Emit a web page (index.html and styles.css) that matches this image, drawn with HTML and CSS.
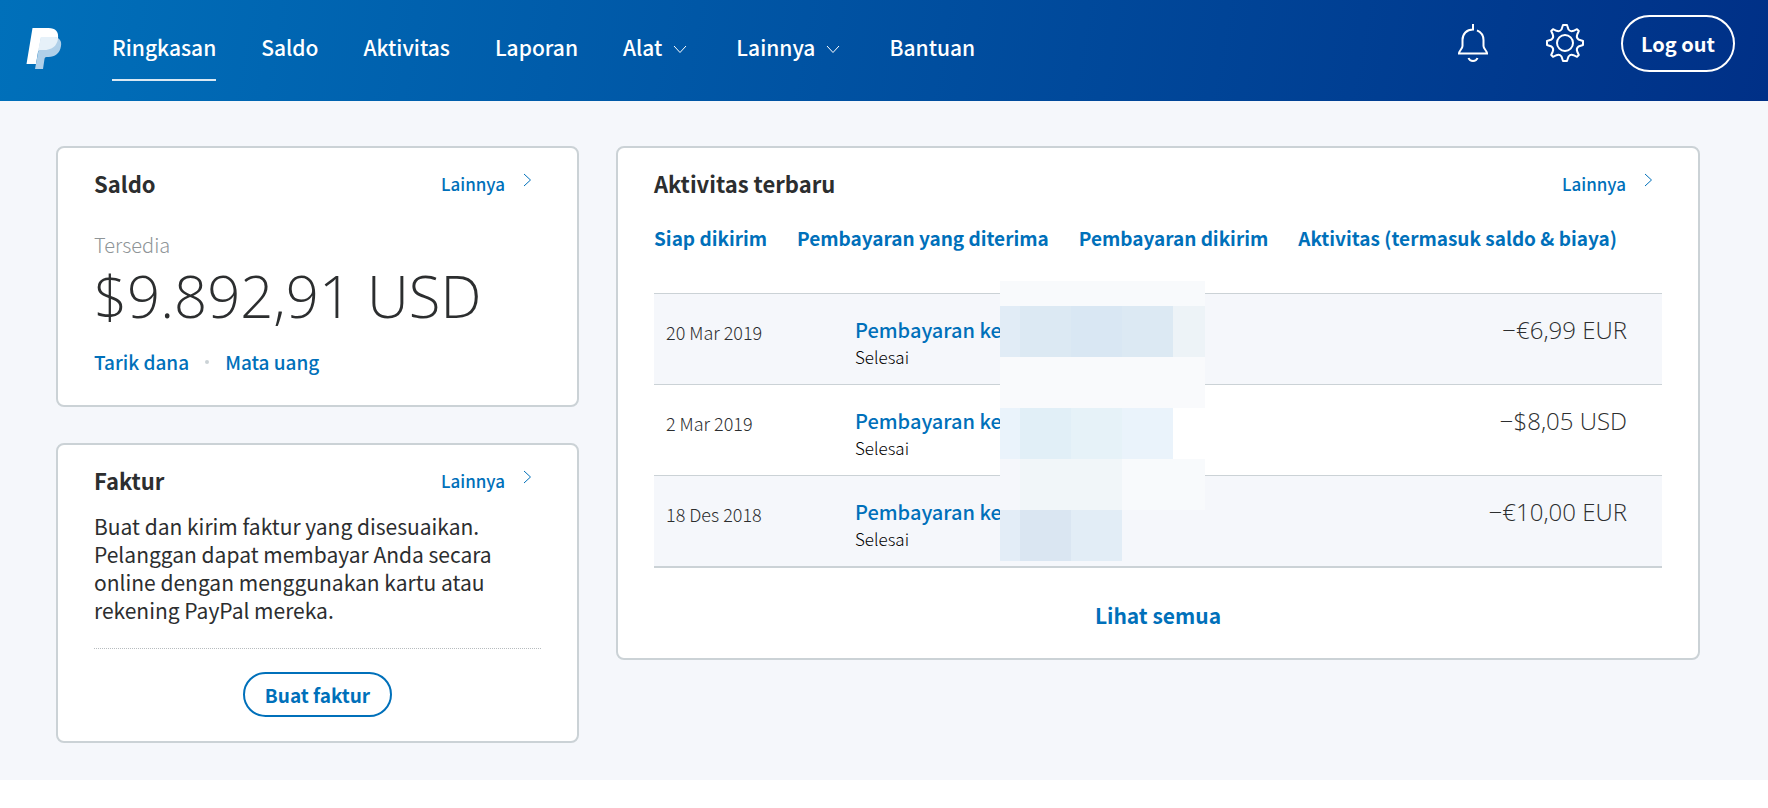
FILE: index.html
```html
<!DOCTYPE html>
<html lang="id">
<head>
<meta charset="utf-8">
<meta name="viewport" content="width=device-width, initial-scale=1">
<title>PayPal: Ringkasan</title>
<link rel="stylesheet" href="styles.css">
</head>
<body>
<header class="header">
  <a class="logo" href="#" aria-label="PayPal">
    <svg width="36" height="42" viewBox="0 0 36 42" aria-hidden="true">
      <path fill="#fff" d="M6.500 0H22.500C29.500 0 33 4 32 10.500C30.800 18.500 25.500 22 17.500 22H14.500C13 22 12.300 22.800 12 24L10 36H0.500Z"/>
      <path fill="#b0d0e9" d="M15 9H27C33.500 9 36 13 35 18C33.800 25.500 29 29 22.500 29H20.500C19.300 29 18.700 29.800 18.500 31L17 41H9Z"/>
      <path fill="#e6f1f9" d="M15 9H27C29 9 30.800 9.400 32.100 10.200C31 18.500 25.500 22 17.500 22H13.500C12.800 22 12.200 22.500 12 23Z"/>
    </svg>
  </a>
  <nav class="nav">
    <a class="nav-link nav-current" href="#" aria-current="page">Ringkasan</a>
    <a class="nav-link" href="#">Saldo</a>
    <a class="nav-link" href="#">Aktivitas</a>
    <a class="nav-link" href="#">Laporan</a>
    <button class="nav-link nav-menu" type="button">Alat
      <svg class="caret" width="14" height="9" viewBox="0 0 14 9" aria-hidden="true"><path d="M1 1L7 7.500L13 1"/></svg>
    </button>
    <button class="nav-link nav-menu" type="button">Lainnya
      <svg class="caret" width="14" height="9" viewBox="0 0 14 9" aria-hidden="true"><path d="M1 1L7 7.500L13 1"/></svg>
    </button>
    <a class="nav-link" href="#">Bantuan</a>
  </nav>
  <div class="tools">
    <button class="icon-button" type="button" aria-label="Notifikasi">
      <svg width="30" height="38" viewBox="0 0 30 38" aria-hidden="true">
        <path d="M15 0V5.500C8.500 5.500 4.500 10 4.500 16V22C4.500 25 1 26.500 1 29.500H29C29 26.500 25.500 25 25.500 22V16C25.500 11.500 23 8 19 6.300M10.500 34C12 38 18 38 19.500 34"/>
      </svg>
    </button>
    <button class="icon-button" type="button" aria-label="Pengaturan">
      <svg width="38" height="38" viewBox="0 0 38 38" aria-hidden="true">
        <circle cx="19" cy="19" r="8"/>
        <path stroke-linejoin="round" d="M17 1H21L22.500 5.500Q24.500 8 27.500 6.800L31 5.200L32.800 7L31.200 10.500Q30 13.500 32.500 15.500L37 17V21L32.500 22.500Q30 24.500 31.200 27.500L32.800 31L31 32.800L27.500 31.200Q24.500 30 22.500 32.500L21 37H17L15.500 32.500Q13.500 30 10.500 31.200L7 32.800L5.200 31L6.800 27.500Q8 24.500 5.500 22.500L1 21V17L5.500 15.500Q8 13.500 6.800 10.500L5.200 7L7 5.200L10.500 6.800Q13.500 8 15.500 5.500Z"/>
      </svg>
    </button>
    <button class="logout" type="button">Log out</button>
  </div>
</header>

<main class="main">
  <div class="column">
    <section class="card">
      <div class="card-head">
        <h2 class="card-title">Saldo</h2>
        <a class="more" href="#">Lainnya
          <svg width="9" height="14" viewBox="0 0 9 14" aria-hidden="true"><path d="M1 1L7.500 7L1 13"/></svg>
        </a>
      </div>
      <p class="balance-label">Tersedia</p>
      <p class="balance">$9.892,91 USD</p>
      <div class="balance-links">
        <a href="#">Tarik dana</a>
        <span class="dot"></span>
        <a href="#">Mata uang</a>
      </div>
    </section>
    <section class="card">
      <div class="card-head">
        <h2 class="card-title">Faktur</h2>
        <a class="more" href="#">Lainnya
          <svg width="9" height="14" viewBox="0 0 9 14" aria-hidden="true"><path d="M1 1L7.500 7L1 13"/></svg>
        </a>
      </div>
      <p class="invoice-text">Buat dan kirim faktur yang disesuaikan. Pelanggan dapat membayar Anda secara online dengan menggunakan kartu atau rekening PayPal mereka.</p>
      <div class="invoice-action">
        <button class="outline-button" type="button">Buat faktur</button>
      </div>
    </section>
  </div>

  <section class="card">
    <div class="card-head">
      <h2 class="card-title">Aktivitas terbaru</h2>
      <a class="more" href="#">Lainnya
        <svg width="9" height="14" viewBox="0 0 9 14" aria-hidden="true"><path d="M1 1L7.500 7L1 13"/></svg>
      </a>
    </div>
    <div class="filters">
      <a href="#">Siap dikirim</a>
      <a href="#">Pembayaran yang diterima</a>
      <a href="#">Pembayaran dikirim</a>
      <a href="#">Aktivitas (termasuk saldo &amp; biaya)</a>
    </div>
    <div class="table-wrap">
      <table class="table">
        <tbody>
          <tr>
            <td class="date">20 Mar 2019</td>
            <td class="detail"><a href="#">Pembayaran ke</a><span>Selesai</span></td>
            <td class="amount">−€6,99 EUR</td>
          </tr>
          <tr>
            <td class="date">2 Mar 2019</td>
            <td class="detail"><a href="#">Pembayaran ke</a><span>Selesai</span></td>
            <td class="amount">−$8,05 USD</td>
          </tr>
          <tr>
            <td class="date">18 Des 2018</td>
            <td class="detail"><a href="#">Pembayaran ke</a><span>Selesai</span></td>
            <td class="amount">−€10,00 EUR</td>
          </tr>
        </tbody>
      </table>
      <div class="mosaic" aria-hidden="true">
        <i class="span-all m1"></i>
        <i class="m2"></i><i class="m3"></i><i class="m4"></i><i class="m3"></i><i class="m5"></i>
        <i class="span-all m6"></i>
        <i class="m7"></i><i class="m8"></i><i class="m9"></i><i class="m7"></i><i class="m10"></i>
        <i class="m11"></i><i class="m12"></i><i class="m12"></i><i class="m1"></i><i class="m1"></i>
        <i class="m13"></i><i class="m14"></i><i class="m15"></i><i class="m11"></i>
      </div>
    </div>
    <a class="view-all" href="#">Lihat semua</a>
  </section>
</main>
</body>
</html>
```
FILE: styles.css
```css
* {
  box-sizing: border-box;
}

body {
  margin: 0;
  background: #fff;
  color: #2c2e2f;
  font-family: "Noto Sans CJK SC", "Noto Sans", sans-serif;
  font-size: 21px;
  line-height: 28px;
}

h2,
p {
  margin: 0;
}

a {
  color: #0070ba;
  text-decoration: none;
}

button {
  padding: 0;
  border: 0;
  background: none;
  color: inherit;
  font: inherit;
  cursor: pointer;
}

svg {
  display: block;
  fill: none;
}

/* Header */
.header {
  display: flex;
  align-items: flex-start;
  height: 101px;
  padding: 0 33px 0 26px;
  background: linear-gradient(100deg, #0070ba 0%, #003087 100%);
  color: #fff;
}

.logo {
  margin: 28px 50px 0 0;
}

.nav {
  display: flex;
  gap: 45px;
  padding-top: 33px;
}

.nav-link {
  height: 48px;
  color: #fff;
  font-weight: 500;
  white-space: nowrap;
}

.nav-current {
  border-bottom: 2px solid #d9e8f3;
}

.nav-menu {
  display: flex;
  gap: 11px;
  align-items: flex-start;
  margin-right: 4px;
}

.caret {
  margin-top: 12px;
  stroke: #fff;
}

.tools {
  display: flex;
  align-items: flex-start;
  margin: 15px 0 0 auto;
}

.icon-button {
  margin: 9px 58px 0 0;
}

.icon-button + .icon-button {
  margin-right: 37px;
}

.icon-button svg {
  stroke: #fff;
  stroke-width: 2;
}

.logout {
  height: 57px;
  padding: 0 18px;
  border: 2px solid #fff;
  border-radius: 29px;
  font-size: 20px;
  font-weight: 700;
}

/* Page body */
.main {
  display: grid;
  grid-template-columns: 523fr 1084fr;
  gap: 37px;
  align-items: start;
  padding: 45px 68px 37px 56px;
  background: #f5f7fb;
}

.column {
  display: grid;
  gap: 36px;
}

.card {
  padding: 21px 36px 24px;
  border: 2px solid #cbd2d6;
  border-radius: 8px;
  background: #fff;
}

.card-head {
  display: flex;
  justify-content: space-between;
  padding-right: 9px;
}

.card-title {
  font-size: 22px;
  font-weight: 700;
}

.more {
  display: flex;
  gap: 18px;
  font-size: 17px;
  font-weight: 500;
  line-height: 30px;
}

.more svg {
  margin-top: 4px;
  stroke: #0070ba;
}

/* Balance */
.balance-label {
  margin-top: 32px;
  color: #8f9598;
  font-size: 20px;
  font-weight: 300;
}

.balance {
  font-family: "Open Sans", "Noto Sans", sans-serif;
  font-size: 58px;
  font-weight: 300;
  line-height: 74px;
}

.balance-links {
  display: flex;
  gap: 16px;
  align-items: center;
  margin: 15px 0 5px;
  font-size: 19px;
  font-weight: 500;
}

.dot {
  width: 4px;
  height: 4px;
  border-radius: 50%;
  background: #cbd2d6;
}

/* Invoice */
.invoice-text {
  padding: 16px 0 24px;
  border-bottom: 1px dotted #b7bcbf;
}

.invoice-action {
  padding-top: 23px;
  text-align: center;
}

.outline-button {
  height: 45px;
  padding: 0 20px;
  border: 2px solid #0070ba;
  border-radius: 23px;
  color: #0070ba;
  font-size: 19px;
  font-weight: 700;
}

/* Activity */
.filters {
  display: flex;
  flex-wrap: wrap;
  gap: 0 30px;
  margin: 25px 0 41px;
  font-size: 19px;
  font-weight: 700;
}

.table-wrap {
  position: relative;
}

.table {
  width: 100%;
  border-collapse: collapse;
  border-bottom: 2px solid #cbd2d6;
}

.table tr {
  height: 91px;
  border-top: 1px solid #cbd2d6;
}

.table tr:nth-child(odd) {
  background: #f5f7fb;
}

.table td {
  padding: 22px 0 0;
  line-height: 27px;
  vertical-align: top;
}

.table .date {
  width: 201px;
  padding: 25px 0 0 12px;
  font-size: 18px;
  font-weight: 300;
}

.detail a {
  display: block;
  font-size: 20px;
  font-weight: 500;
}

.detail span {
  display: block;
  color: #000;
  font-size: 17px;
  font-weight: 300;
}

.table .amount {
  padding-right: 35px;
  font-family: "Open Sans", "Noto Sans", sans-serif;
  font-size: 24px;
  font-weight: 300;
  text-align: right;
}

.view-all {
  display: block;
  margin: 33px 0 5px;
  font-weight: 700;
  text-align: center;
}

/* Blocks that hide the payee names */
.mosaic {
  position: absolute;
  top: -12px;
  left: 346px;
  display: grid;
  grid-template-columns: 20px 51px 51px 51px 32px;
  grid-template-rows: 25px repeat(5, 51px);
}

.span-all { grid-column: 1 / -1; }
.m1 { background: #f8fafc; }
.m2 { background: #e1ecf6; }
.m3 { background: #dce9f3; }
.m4 { background: #d9e7f3; }
.m5 { background: #edf3f7; }
.m6 { background: #f9fafc; }
.m7 { background: #eaf3fb; }
.m8 { background: #e1eff7; }
.m9 { background: #e6f2f8; }
.m10 { background: #fff; }
.m11 { background: #f5f7fb; }
.m12 { background: #f1f6f9; }
.m13 { background: #e3edf7; }
.m14 { background: #dae6f2; }
.m15 { background: #e2edf6; }
```
